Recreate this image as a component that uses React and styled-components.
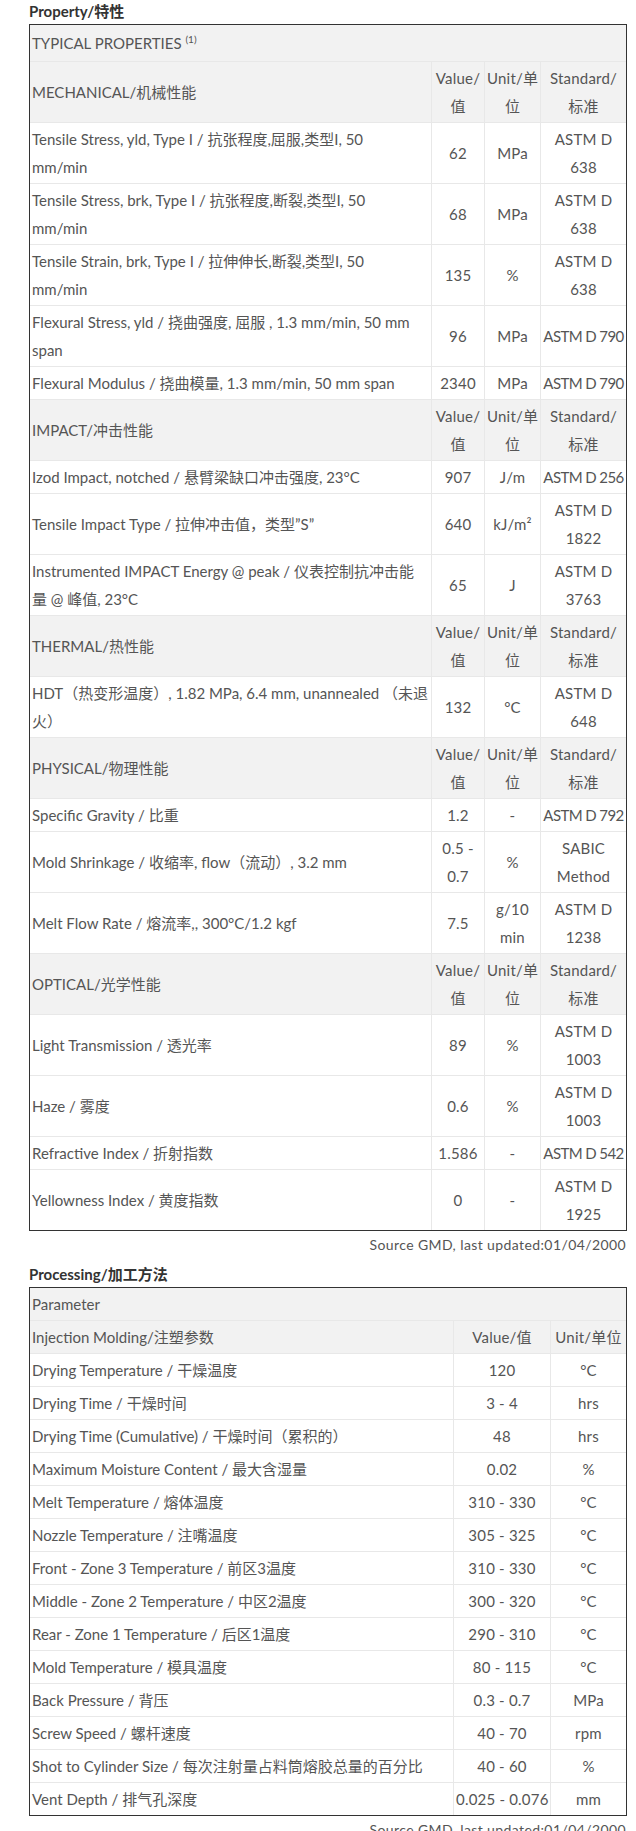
import React from 'react'
import styled, { createGlobalStyle } from 'styled-components'

const GlobalStyle = createGlobalStyle`
  body {
    margin: 0;
    background: #fff;
    font-family: "Lato", "Noto Sans CJK SC", sans-serif;
    color: #555;
  }
`

const properties = [
  {
    title: 'MECHANICAL/机械性能',
    rows: [
      { name: ['Tensile Stress, yld, Type I / 抗张程度,屈服,类型I, 50', 'mm/min'], value: ['62'], unit: ['MPa'], std: ['ASTM D', '638'] },
      { name: ['Tensile Stress, brk, Type I / 抗张程度,断裂,类型I, 50', 'mm/min'], value: ['68'], unit: ['MPa'], std: ['ASTM D', '638'] },
      { name: ['Tensile Strain, brk, Type I / 拉伸伸长,断裂,类型I, 50', 'mm/min'], value: ['135'], unit: ['%'], std: ['ASTM D', '638'] },
      { name: ['Flexural Stress, yld / 挠曲强度, 屈服 , 1.3 mm/min, 50 mm', 'span'], value: ['96'], unit: ['MPa'], std: ['ASTM D 790'] },
      { name: ['Flexural Modulus / 挠曲模量, 1.3 mm/min, 50 mm span'], value: ['2340'], unit: ['MPa'], std: ['ASTM D 790'] },
    ],
  },
  {
    title: 'IMPACT/冲击性能',
    rows: [
      { name: ['Izod Impact, notched / 悬臂梁缺口冲击强度, 23°C'], value: ['907'], unit: ['J/m'], std: ['ASTM D 256'] },
      { name: ['Tensile Impact Type / 拉伸冲击值，类型”S”'], value: ['640'], unit: ['kJ/m²'], std: ['ASTM D', '1822'] },
      { name: ['Instrumented IMPACT Energy @ peak / 仪表控制抗冲击能', '量 @ 峰值, 23°C'], value: ['65'], unit: ['J'], std: ['ASTM D', '3763'] },
    ],
  },
  {
    title: 'THERMAL/热性能',
    rows: [
      { name: ['HDT（热变形温度）, 1.82 MPa, 6.4 mm, unannealed （未退', '火）'], value: ['132'], unit: ['°C'], std: ['ASTM D', '648'] },
    ],
  },
  {
    title: 'PHYSICAL/物理性能',
    rows: [
      { name: ['Specific Gravity / 比重'], value: ['1.2'], unit: ['-'], std: ['ASTM D 792'] },
      { name: ['Mold Shrinkage / 收缩率, flow（流动）, 3.2 mm'], value: ['0.5 -', '0.7'], unit: ['%'], std: ['SABIC', 'Method'] },
      { name: ['Melt Flow Rate / 熔流率,, 300°C/1.2 kgf'], value: ['7.5'], unit: ['g/10', 'min'], std: ['ASTM D', '1238'] },
    ],
  },
  {
    title: 'OPTICAL/光学性能',
    rows: [
      { name: ['Light Transmission / 透光率'], value: ['89'], unit: ['%'], std: ['ASTM D', '1003'] },
      { name: ['Haze / 雾度'], value: ['0.6'], unit: ['%'], std: ['ASTM D', '1003'] },
      { name: ['Refractive Index / 折射指数'], value: ['1.586'], unit: ['-'], std: ['ASTM D 542'] },
      { name: ['Yellowness Index / 黄度指数'], value: ['0'], unit: ['-'], std: ['ASTM D', '1925'] },
    ],
  },
]

const processing = [
  ['Drying Temperature / 干燥温度', '120', '°C'],
  ['Drying Time / 干燥时间', '3 - 4', 'hrs'],
  ['Drying Time (Cumulative) / 干燥时间（累积的）', '48', 'hrs'],
  ['Maximum Moisture Content / 最大含湿量', '0.02', '%'],
  ['Melt Temperature / 熔体温度', '310 - 330', '°C'],
  ['Nozzle Temperature / 注嘴温度', '305 - 325', '°C'],
  ['Front - Zone 3 Temperature / 前区3温度', '310 - 330', '°C'],
  ['Middle - Zone 2 Temperature / 中区2温度', '300 - 320', '°C'],
  ['Rear - Zone 1 Temperature / 后区1温度', '290 - 310', '°C'],
  ['Mold Temperature / 模具温度', '80 - 115', '°C'],
  ['Back Pressure / 背压', '0.3 - 0.7', 'MPa'],
  ['Screw Speed / 螺杆速度', '40 - 70', 'rpm'],
  ['Shot to Cylinder Size / 每次注射量占料筒熔胶总量的百分比', '40 - 60', '%'],
  ['Vent Depth / 排气孔深度', '0.025 - 0.076', 'mm'],
]

function Lines({ items }) {
  return items.map((line, i) => (
    <React.Fragment key={i}>
      {i > 0 && <br />}
      <Line>{line}</Line>
    </React.Fragment>
  ))
}

export default function App() {
  return (
    <Page>
      <GlobalStyle />
      <Title>Property/特性</Title>
      <Table>
        <colgroup>
          <col style={{ width: 402 }} />
          <col style={{ width: 53 }} />
          <col style={{ width: 56 }} />
          <col />
        </colgroup>
        <tbody>
          <Row head>
            <Cell colSpan={4} tall>
              TYPICAL PROPERTIES <Sup>(1)</Sup>
            </Cell>
          </Row>
          {properties.map((section) => (
            <React.Fragment key={section.title}>
              <Row head>
                <Cell>{section.title}</Cell>
                <Cell center><Lines items={['Value/', '值']} /></Cell>
                <Cell center><Lines items={['Unit/单', '位']} /></Cell>
                <Cell center><Lines items={['Standard/', '标准']} /></Cell>
              </Row>
              {section.rows.map((row) => (
                <Row key={row.name[0]}>
                  <Cell><Lines items={row.name} /></Cell>
                  <Cell center><Lines items={row.value} /></Cell>
                  <Cell center><Lines items={row.unit} /></Cell>
                  <Cell center tight={row.std.length === 1}><Lines items={row.std} /></Cell>
                </Row>
              ))}
            </React.Fragment>
          ))}
        </tbody>
      </Table>
      <Source>Source GMD, last updated:01/04/2000</Source>

      <Title>Processing/加工方法</Title>
      <Table>
        <colgroup>
          <col style={{ width: 424 }} />
          <col style={{ width: 97 }} />
          <col />
        </colgroup>
        <tbody>
          <Row head>
            <Cell colSpan={3}>Parameter</Cell>
          </Row>
          <Row head>
            <Cell>Injection Molding/注塑参数</Cell>
            <Cell center>Value/值</Cell>
            <Cell center>Unit/单位</Cell>
          </Row>
          {processing.map(([name, value, unit]) => (
            <Row key={name}>
              <Cell>{name}</Cell>
              <Cell center>{value}</Cell>
              <Cell center>{unit}</Cell>
            </Row>
          ))}
        </tbody>
      </Table>
      <Source>Source GMD, last updated:01/04/2000</Source>
    </Page>
  )
}

const Page = styled.div`
  width: 598px;
  padding-left: 29px;
  font-size: 15px;
`

const Title = styled.h3`
  margin: 0 0 2px;
  font-size: 15px;
  line-height: 22px;
  font-weight: 700;
  color: #333;
`

const Table = styled.table`
  width: 598px;
  table-layout: fixed;
  border-collapse: separate;
  border-spacing: 0;
  border: 1px solid #333;
`

const Row = styled.tr`
  background: ${(p) => (p.head ? '#f2f2f2' : '#fff')};

  &:last-child td {
    border-bottom: none;
  }
`

const Cell = styled.td`
  padding: ${(p) => (p.tall ? '4px 2px' : '2px 2px')};
  line-height: 28px;
  vertical-align: middle;
  text-align: ${(p) => (p.center ? 'center' : 'left')};
  letter-spacing: ${(p) => (p.tight ? '-0.6px' : p.center ? '0.2px' : '0')};
  border-right: 1px solid #e8e8e8;
  border-bottom: 1px solid #e8e8e8;
  white-space: nowrap;
  overflow: hidden;

  &:last-child {
    border-right: none;
  }
`

const Line = styled.span`
  white-space: nowrap;
`

const Sup = styled.sup`
  font-size: 10px;
  line-height: 0;
`

const Source = styled.p`
  margin: 0 0 4px;
  padding-right: 1px;
  font-size: 14px;
  line-height: 28px;
  text-align: right;
  letter-spacing: 0.4px;
`
